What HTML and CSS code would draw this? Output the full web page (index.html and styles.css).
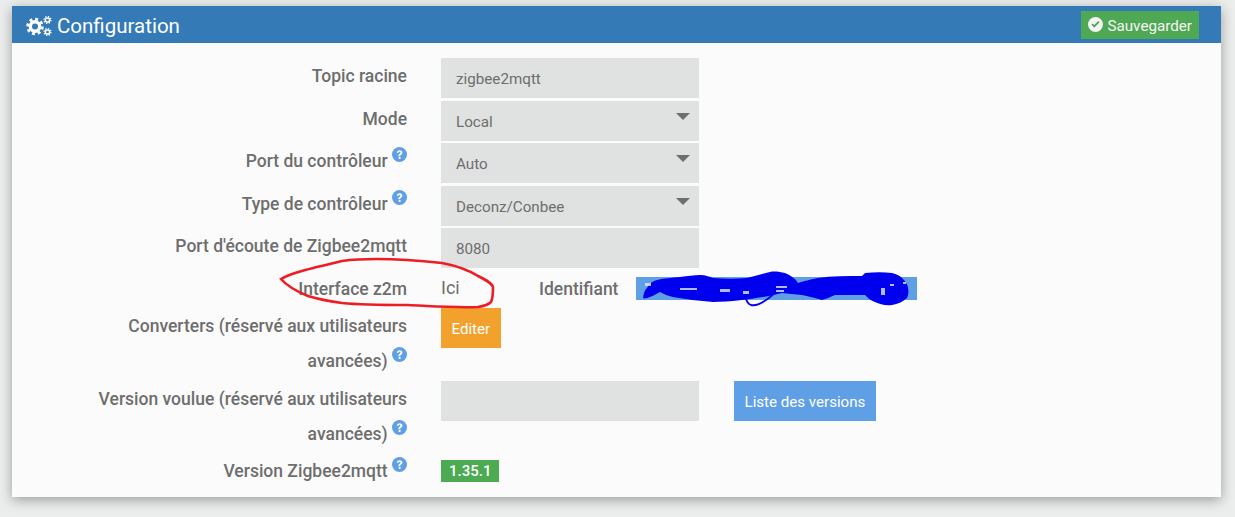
FILE: index.html
```html
<!DOCTYPE html>
<html lang="fr">
<head>
    <meta charset="UTF-8">
    <title>Configuration</title>
    <link rel="stylesheet" href="styles.css">
</head>
<body>
    <svg width="0" height="0" class="defs">
        <symbol id="help" viewBox="0 0 24 24">
            <circle cx="12" cy="12" r="12" fill="#5f9fe6"/>
            <path d="M7.500 9.200c.2-2.700 2.200-4.200 4.700-4.200 2.600 0 4.500 1.500 4.500 3.800 0 1.700-1 2.600-2.200 3.400-1 .7-1.300 1.100-1.300 2.100v.4h-3v-.7c0-1.700.7-2.500 1.800-3.300 1-.7 1.500-1.100 1.500-1.800 0-.8-.6-1.300-1.400-1.300-1 0-1.500.6-1.600 1.600z" fill="#fff"/>
            <rect x="10.700" y="16" width="3" height="3" fill="#fff"/>
        </symbol>
    </svg>

    <div class="panel">
        <div class="panel-heading">
            <h3 class="panel-title">
                <svg class="icon-cogs" viewBox="0 0 26 20" width="26" height="20">
                    <g fill="none" stroke="#fff">
                        <circle cx="9" cy="10.500" r="4.700" stroke-width="3.400"/>
                        <circle cx="9" cy="10.500" r="7.400" stroke-width="2.800" stroke-dasharray="2.900 2.910"/>
                        <circle cx="21.500" cy="4" r="2.100" stroke-width="1.500"/>
                        <circle cx="21.500" cy="4" r="3.400" stroke-width="1.400" stroke-dasharray="1.300 1.370"/>
                        <circle cx="21.500" cy="16" r="2.100" stroke-width="1.500"/>
                        <circle cx="21.500" cy="16" r="3.400" stroke-width="1.400" stroke-dasharray="1.300 1.370"/>
                    </g>
                </svg>
                Configuration
            </h3>
            <a class="btn-save">
                <svg viewBox="0 0 24 24" width="15" height="15">
                    <circle cx="12" cy="12" r="12" fill="#f4f4f4"/>
                    <path d="M5.500 12.500l4.500 4.500 8.500-8.500-2.200-2.200-6.300 6.300-2.300-2.300z" fill="#4fa853"/>
                </svg>
                <span class="save-text">Sauvegarder</span>
            </a>
        </div>

        <div class="panel-body">
            <div class="form-row">
                <label>Topic racine</label>
                <div class="field">zigbee2mqtt</div>
            </div>
            <div class="form-row">
                <label>Mode</label>
                <div class="field select">Local</div>
            </div>
            <div class="form-row">
                <label>Port du contrôleur <svg class="help"><use href="#help"/></svg></label>
                <div class="field select">Auto</div>
            </div>
            <div class="form-row">
                <label>Type de contrôleur <svg class="help"><use href="#help"/></svg></label>
                <div class="field select">Deconz/Conbee</div>
            </div>
            <div class="form-row">
                <label>Port d'écoute de Zigbee2mqtt</label>
                <div class="field">8080</div>
            </div>
            <div class="form-row row-link">
                <label>Interface z2m</label>
                <div class="link-value">Ici</div>
                <div class="ident-label">Identifiant</div>
                <div class="ident-value"></div>
            </div>
            <div class="form-row row-tall">
                <label>Converters (réservé aux utilisateurs avancées) <svg class="help"><use href="#help"/></svg></label>
                <a class="btn btn-orange">Editer</a>
            </div>
            <div class="form-row row-tall">
                <label>Version voulue (réservé aux utilisateurs avancées) <svg class="help"><use href="#help"/></svg></label>
                <div class="field"></div>
                <a class="btn btn-blue">Liste des versions</a>
            </div>
            <div class="form-row row-version">
                <label>Version Zigbee2mqtt <svg class="help"><use href="#help"/></svg></label>
                <span class="badge">1.35.1</span>
            </div>
        </div>
    </div>

    <!-- annotations par dessus la capture -->
    <svg class="scribbles" viewBox="0 0 1235 517" width="1235" height="517">
        <path d="M281 279C290 273 312 268 342 261C365 258 395 258 442 263C458 266 470 271 478 276C486 280 492 283 493 287C493 293 493 298 491 302C488 305 484 306 478 307C455 308 430 306 408 305C385 305 362 305 342 303C328 301 317 299 308 296C298 292 288 287 281 279Z" fill="none" stroke="#ee1c25" stroke-width="2.600"/>
        <path d="M643 298C644 292 645 290 647 288C650 283 653 281 657 280C665 278 672 278 680 277C688 276 694 275 700 275C706 275 710 277 713 278C725 279 736 279 747 278C755 276 762 274 770 272C775 271 780 272 785 273C790 275 795 278 798 283C805 281 811 279 818 278C832 276 848 276 862 276L865 273C875 272 884 272 892 273C897 274 900 276 902 278C906 282 908 285 908 288C909 292 908 296 907 298C902 302 898 304 892 305C885 306 880 304 875 302C870 300 868 298 865 295C855 295 845 295 835 295C830 297 826 299 822 300C815 298 808 296 802 295C795 294 788 294 782 293C775 295 769 296 763 297C750 299 730 302 713 302C700 301 685 299 673 297C668 296 664 294 660 292C656 294 653 296 650 297C647 298 645 299 643 298Z" fill="#0000ee"/>
        <path d="M745 296C746 300 748 304 751 305C756 306 762 303 766 300C769 298 771 296 773 295" fill="none" stroke="#0000ee" stroke-width="1.800"/>
        <g fill="#dfe8f8" opacity="0.8">
            <rect x="645" y="283" width="6" height="3"/>
            <rect x="680" y="288" width="17" height="2"/>
            <rect x="720" y="289" width="10" height="3"/>
            <rect x="743" y="291" width="6" height="3"/>
            <rect x="776" y="286" width="11" height="2"/>
            <rect x="776" y="290" width="8" height="2"/>
            <rect x="881" y="288" width="4" height="7"/>
            <rect x="890" y="284" width="4" height="2"/>
            <rect x="903" y="282" width="3" height="2"/>
        </g>
    </svg>
</body>
</html>
```

FILE: styles.css
```css
body {
    font-family: 'Roboto', sans-serif;
    background-color: #eceeed;
    margin: 0;
    padding: 6px 14px 20px 12px;
    color: #6e6e6e;
    font-size: 15.200px;
}

.defs {
    position: absolute;
}

.panel {
    background: #fbfbfb;
    box-shadow: 0 3px 12px rgba(0, 0, 0, 0.35);
    height: 491px;
}

.panel-heading {
    background: #337ab7;
    height: 37px;
    display: flex;
    align-items: center;
    justify-content: space-between;
    padding: 0 22px 0 14px;
}

.panel-title {
    margin: 0;
    font-size: 20.500px;
    font-weight: 400;
    color: #fff;
    display: flex;
    align-items: center;
    gap: 5px;
    padding-top: 2px;
}

.btn-save {
    background: #4fa853;
    color: #f4f4f4;
    height: 28px;
    padding: 0 7px;
    display: flex;
    align-items: center;
    gap: 4px;
    font-size: 15.200px;
}

.save-text {
    padding-top: 2px;
}

.panel-body {
    padding-top: 15px;
}

.form-row {
    display: flex;
    align-items: flex-start;
    min-height: 40px;
    margin-bottom: 2.500px;
}

label {
    width: 330px;
    flex: none;
    margin: 0 34px 0 65px;
    padding-top: 1px;
    text-align: right;
    font-size: 17.500px;
    font-weight: 500;
    line-height: 35px;
    color: #6e6e6e;
}

.help {
    width: 15px;
    height: 15px;
    vertical-align: 5px;
}

.field {
    width: 258px;
    height: 40px;
    background: #e0e1e1;
    box-sizing: border-box;
    padding: 0 15px;
    line-height: 42px;
    font-size: 15.200px;
    position: relative;
}

.select::after {
    content: "";
    position: absolute;
    right: 9px;
    top: 12px;
    border-left: 7.500px solid transparent;
    border-right: 7.500px solid transparent;
    border-top: 7px solid #6e6e6e;
}

.row-link {
    min-height: 36px;
    margin-bottom: 1.500px;
    align-items: center;
}

.link-value {
    width: 98px;
    font-size: 18px;
    margin-top: -2px;
}

.ident-label {
    width: 97px;
    font-size: 17.500px;
    font-weight: 500;
}

.ident-value {
    width: 281px;
    height: 23px;
    background: #5f9fe6;
    margin-top: -1px;
}

.row-tall {
    min-height: 71px;
    margin-bottom: 2px;
}

.btn {
    height: 40px;
    line-height: 42px;
    color: #fff;
    font-size: 15.100px;
    padding: 0 10.500px;
}

.btn-orange {
    background: #f2a22c;
}

.btn-blue {
    background: #5f9fe6;
    margin-left: 35px;
}

.row-version {
    min-height: 22px;
}

.row-version label {
    margin-top: -1px;
}

.badge {
    background: #4cab52;
    color: #fff;
    font-size: 15px;
    font-weight: 500;
    line-height: 22px;
    padding: 0 8px;
    margin-top: 6px;
}

.scribbles {
    position: absolute;
    left: 0;
    top: 0;
    pointer-events: none;
}
```
